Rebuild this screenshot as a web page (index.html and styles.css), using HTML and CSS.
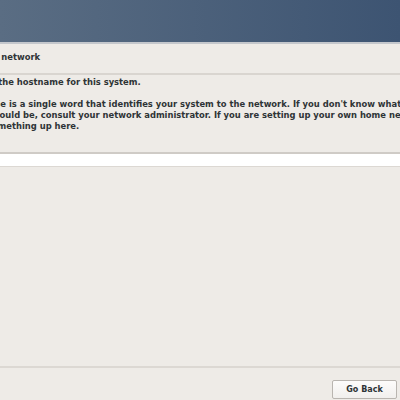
FILE: index.html
```html
<!DOCTYPE html>
<html lang="en">
<head>
  <meta charset="UTF-8">
  <title>Configure the network</title>
  <link rel="stylesheet" href="styles.css">
</head>
<body>
  <div class="screen">
    <div class="banner"></div>
    <div class="dialog">
      <div class="title">Configure the network</div>
      <div class="body">
        <p class="prompt">Please enter the hostname for this system.</p>
        <p class="help">
          <span class="line">The hostname is a single word that identifies your system to the network. If you don't know what your</span>
          <span class="line">hostname should be, consult your network administrator. If you are setting up your own home network, you</span>
          <span class="line">can make something up here.</span>
        </p>
        <div class="entry"><input type="text" id="hostname"></div>
      </div>
      <div class="buttons">
        <button class="btn">Go Back</button>
      </div>
    </div>
  </div>
</body>
</html>
```

FILE: styles.css
```css
html, body {
  margin: 0;
  padding: 0;
}
body {
  width: 400px;
  height: 400px;
  overflow: hidden;
  background: #eeebe7;
  font-family: "DejaVu Sans", sans-serif;
  color: #2e3436;
}
.screen {
  display: flex;
  flex-direction: column;
  height: 400px;
}
.banner {
  height: 42px;
  flex: none;
  background: linear-gradient(to right, #5a6d83, #3d5472);
  border-bottom: 2px solid #c4c7cc;
}
.dialog {
  flex: 1;
  display: flex;
  flex-direction: column;
}
.title {
  height: 29px;
  line-height: 27px;
  margin-left: -66px;
  font-size: 8.4px;
  font-weight: bold;
  border-bottom: 2px solid #d9d5d0;
}
.body {
  flex: 1;
  margin-left: -61px;
}
.prompt {
  margin: 2px 0 0 -3px;
  font-size: 8.4px;
  font-weight: bold;
  line-height: 11px;
}
.help {
  margin: 11px 0 0;
  font-size: 8.4px;
  font-weight: bold;
  line-height: 11px;
}
.line {
  display: block;
  white-space: nowrap;
}
.entry {
  margin: 20px 0 0 61px;
}
.entry input {
  display: block;
  box-sizing: border-box;
  width: 400px;
  height: 15px;
  margin: 0;
  border: none;
  border-top: 2px solid #cfcbc6;
  border-bottom: 1px solid #dcd8d3;
  background: #fff;
  outline: none;
}
.buttons {
  flex: none;
  height: 32px;
  border-top: 2px solid #dcd8d3;
  display: flex;
  justify-content: flex-end;
  align-items: flex-end;
  padding-right: 3px;
}
.btn {
  width: 65px;
  height: 19px;
  padding: 0;
  margin-bottom: 1px;
  font-family: "DejaVu Sans", sans-serif;
  font-size: 8px;
  font-weight: bold;
  color: #2e3436;
  background: linear-gradient(#fdfcfb, #f1efed);
  border: 1px solid #b9b5b0;
  border-radius: 2px;
}
```
